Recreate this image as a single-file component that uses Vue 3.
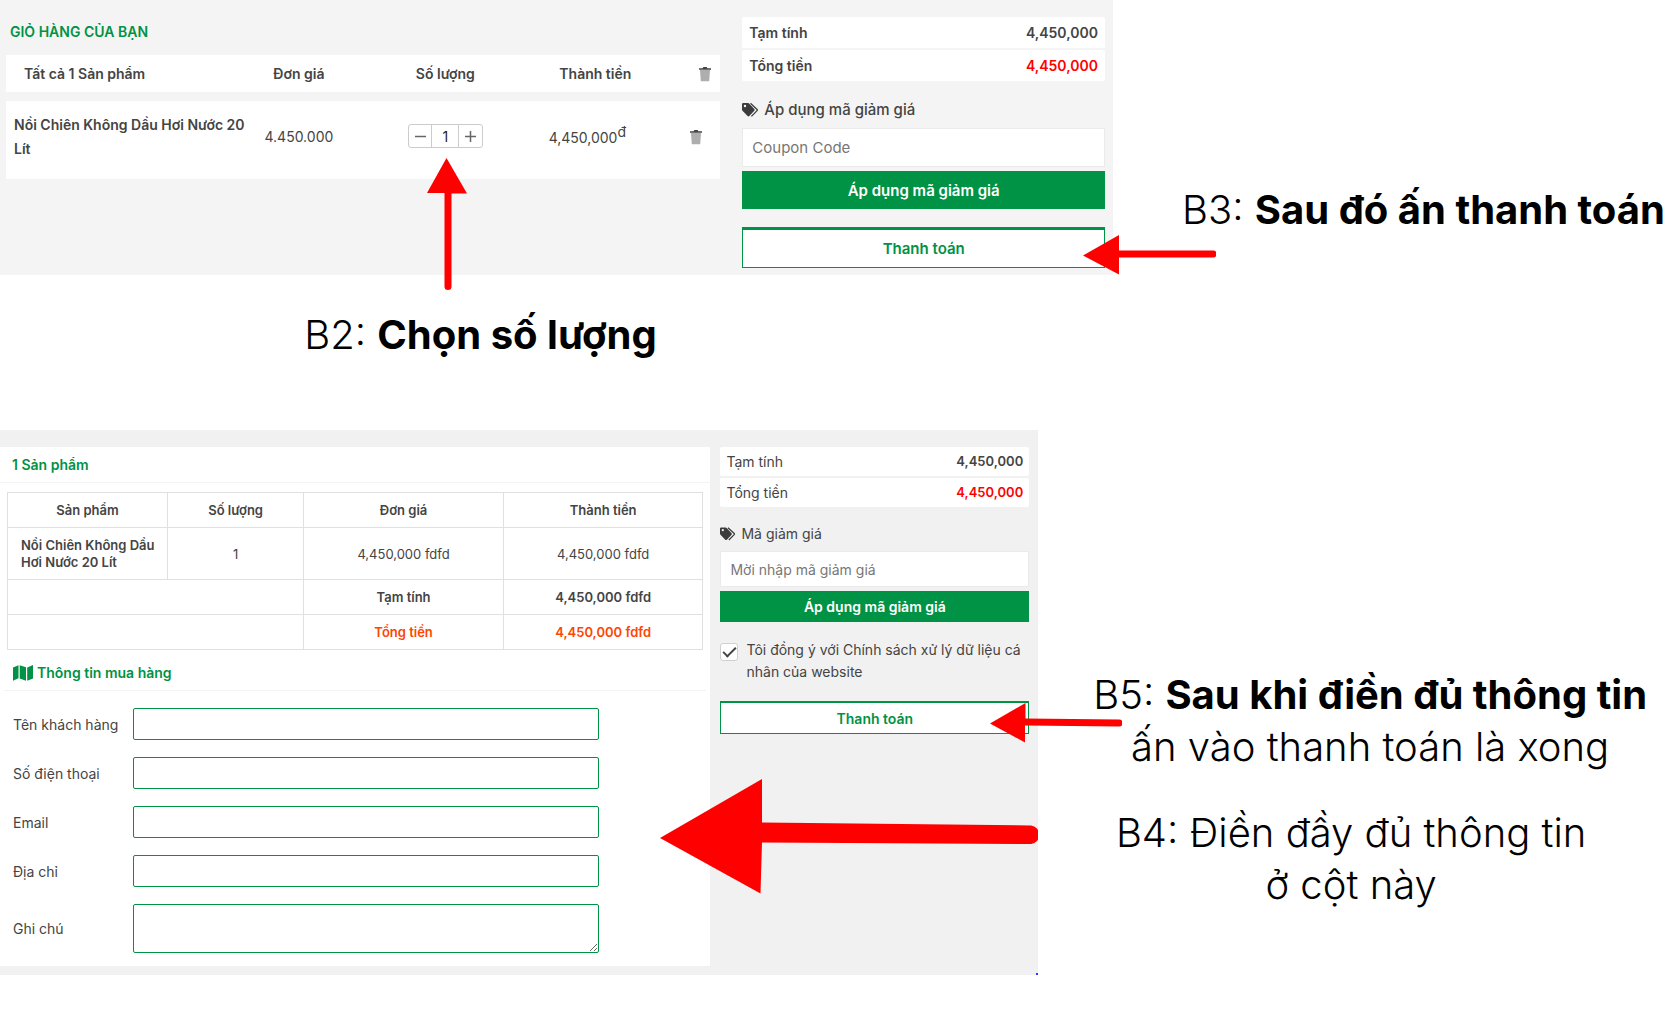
<template>
  <main class="guide">
    <div class="step">
      <section class="cart">
        <div class="cart-main">
          <h2 class="cart-title">GIỎ HÀNG CỦA BẠN</h2>
          <table class="cart-table">
            <colgroup>
              <col class="col-name" />
              <col class="col-price" />
              <col class="col-qty" />
              <col class="col-total" />
              <col class="col-remove" />
            </colgroup>
            <thead>
              <tr>
                <th class="left">Tất cả {{ quantity }} Sản phẩm</th>
                <th>Đơn giá</th>
                <th>Số lượng</th>
                <th>Thành tiền</th>
                <th class="remove">
                  <button type="button" class="icon-btn" aria-label="Xóa tất cả">
                    <svg width="12" height="15" viewBox="0 0 12 15">
                      <path d="M1 3h10l-.8 11.2H1.8z" fill="#aeaeae" />
                      <path d="M0 1.2h3.6L4.4 0h3.2l.8 1.2H12v1.6H0z" fill="#444" />
                    </svg>
                  </button>
                </th>
              </tr>
            </thead>
            <tbody>
              <tr>
                <td class="name">{{ productName }}</td>
                <td>4.450.000</td>
                <td>
                  <div class="stepper">
                    <button type="button" aria-label="Giảm" @click="decrease">
                      <svg width="11" height="11" viewBox="0 0 11 11">
                        <path d="M0 5.5h11" stroke="#666" stroke-width="1.5" />
                      </svg>
                    </button>
                    <input v-model.number="quantity" type="text" aria-label="Số lượng" />
                    <button type="button" aria-label="Tăng" @click="quantity++">
                      <svg width="11" height="11" viewBox="0 0 11 11">
                        <path d="M0 5.5h11M5.5 0v11" stroke="#666" stroke-width="1.5" />
                      </svg>
                    </button>
                    <svg class="arrow arrow-qty" width="40" height="132" viewBox="0 0 40 132">
                      <path d="M19.500 0L40 35.500H24.500V128.500a3.500 3.500 0 0 1-7 0V35H0z" fill="red" />
                    </svg>
                  </div>
                </td>
                <td class="total">4,450,000<sup>đ</sup></td>
                <td class="remove">
                  <button type="button" class="icon-btn" aria-label="Xóa sản phẩm">
                    <svg width="12" height="15" viewBox="0 0 12 15">
                      <path d="M1 3h10l-.8 11.2H1.8z" fill="#aeaeae" />
                      <path d="M0 1.2h3.6L4.4 0h3.2l.8 1.2H12v1.6H0z" fill="#444" />
                    </svg>
                  </button>
                </td>
              </tr>
            </tbody>
          </table>
        </div>

        <div class="cart-side">
          <dl class="summary">
            <div>
              <dt>Tạm tính</dt>
              <dd>4,450,000</dd>
            </div>
            <div>
              <dt>Tổng tiền</dt>
              <dd class="red">4,450,000</dd>
            </div>
          </dl>
          <label class="coupon-label" for="coupon">
            <svg width="17" height="14" viewBox="0 0 17 14">
              <path d="M0 1.200Q0 0 1.200 0H6q.6 0 1.100.5l5.200 5.600q.8.9 0 1.700l-5 5.300q-.9.8-1.700 0L.5 7.700Q0 7.200 0 6.500z" fill="#3c3c3c" />
              <circle cx="3" cy="3" r="1.200" fill="#f4f4f4" />
              <path d="M8.500.3l6.600 6.100q.6.6 0 1.200l-5.700 5.800" fill="none" stroke="#3c3c3c" stroke-width="1.300" />
            </svg>
            Áp dụng mã giảm giá
          </label>
          <input id="coupon" class="coupon-input" type="text" placeholder="Coupon Code" />
          <button type="button" class="apply">Áp dụng mã giảm giá</button>
          <div class="pay-wrap">
            <button type="button" class="pay">Thanh toán</button>
            <svg class="arrow arrow-pay" width="133" height="40" viewBox="0 0 133 40">
              <path d="M0 20.500L36 0V15.500H130a3.500 3.500 0 0 1 0 7H36V39.500z" fill="red" />
            </svg>
          </div>
        </div>
      </section>
      <aside class="notes notes-cart">
        <p>B3: <strong>Sau đó ấn thanh toán</strong></p>
      </aside>
    </div>

    <p class="note-qty">B2: <strong>Chọn số lượng</strong></p>

    <div class="step">
      <section class="checkout">
        <div class="order">
          <h2 class="order-title">{{ quantity }} Sản phẩm</h2>
          <table class="order-table">
            <thead>
              <tr>
                <th class="w-name">Sản phẩm</th>
                <th class="w-qty">Số lượng</th>
                <th>Đơn giá</th>
                <th>Thành tiền</th>
              </tr>
            </thead>
            <tbody>
              <tr class="product">
                <td class="name">{{ productName }}</td>
                <td>{{ quantity }}</td>
                <td>4,450,000 fdfd</td>
                <td>4,450,000 fdfd</td>
              </tr>
              <tr class="sum">
                <td colspan="2"></td>
                <td>Tạm tính</td>
                <td>4,450,000 fdfd</td>
              </tr>
              <tr class="sum grand">
                <td colspan="2"></td>
                <td>Tổng tiền</td>
                <td>4,450,000 fdfd</td>
              </tr>
            </tbody>
          </table>
          <h2 class="info-title">
            <svg width="20" height="16" viewBox="0 0 20 16">
              <path d="M0 2.400L5.500.3v13L0 15.700zM6.700.3l6.300 2v13.400l-6.300-2.200zM14.200 2.400L20 0v13.400l-5.800 2.400z" fill="#009245" />
            </svg>
            Thông tin mua hàng
          </h2>
          <form class="info" @submit.prevent>
            <div v-for="field in fields" :key="field.id" class="field">
              <label :for="field.id">{{ field.label }}</label>
              <textarea v-if="field.multiline" :id="field.id" v-model="field.value"></textarea>
              <input v-else :id="field.id" v-model="field.value" type="text" />
            </div>
          </form>
        </div>

        <div class="order-side">
          <dl class="summary small">
            <div>
              <dt>Tạm tính</dt>
              <dd>4,450,000</dd>
            </div>
            <div>
              <dt>Tổng tiền</dt>
              <dd class="red">4,450,000</dd>
            </div>
          </dl>
          <label class="coupon-label small" for="discount">
            <svg width="16" height="14" viewBox="0 0 17 14">
              <path d="M0 1.200Q0 0 1.200 0H6q.6 0 1.100.5l5.200 5.600q.8.9 0 1.700l-5 5.300q-.9.8-1.700 0L.5 7.700Q0 7.200 0 6.500z" fill="#3c3c3c" />
              <circle cx="3" cy="3" r="1.200" fill="#f1f1f1" />
              <path d="M8.500.3l6.600 6.100q.6.6 0 1.200l-5.700 5.800" fill="none" stroke="#3c3c3c" stroke-width="1.300" />
            </svg>
            Mã giảm giá
          </label>
          <input id="discount" class="coupon-input small" type="text" placeholder="Mời nhập mã giảm giá" />
          <button type="button" class="apply small">Áp dụng mã giảm giá</button>
          <label class="agree">
            <input v-model="agreed" type="checkbox" />
            <span>Tôi đồng ý với Chính sách xử lý dữ liệu cá nhân của website</span>
          </label>
          <div class="pay-wrap">
            <button type="button" class="pay small">Thanh toán</button>
            <svg class="arrow arrow-done" width="132" height="40" viewBox="0 0 132 40">
              <path d="M0 20.500L35.500 0V15.500L129 16.500a3.200 3.200 0 0 1 0 7L35 22.500V39.500z" fill="red" />
            </svg>
          </div>
        </div>

        <svg class="arrow arrow-form" width="378" height="115" viewBox="0 0 378 115">
          <path d="M0 59L102 0V43.500L371 46.500a9.300 9.300 0 0 1 0 18.500L102 63.500L100.500 114.500z" fill="red" />
        </svg>
        <i class="dot"></i>
      </section>
      <aside class="notes notes-checkout">
        <p>
          B5: <strong>Sau khi điền đủ thông tin</strong><br />
          ấn vào thanh toán là xong
        </p>
        <p class="note-form">
          B4: Điền đầy đủ thông tin<br />
          ở cột này
        </p>
      </aside>
    </div>
  </main>
</template>

<script setup>
import { ref, reactive } from 'vue'

const productName = 'Nồi Chiên Không Dầu Hơi Nước 20 Lít'
const quantity = ref(1)
const agreed = ref(true)

const fields = reactive([
  { id: 'customer', label: 'Tên khách hàng', value: '' },
  { id: 'phone', label: 'Số điện thoại', value: '' },
  { id: 'email', label: 'Email', value: '' },
  { id: 'address', label: 'Địa chỉ', value: '' },
  { id: 'note', label: 'Ghi chú', value: '', multiline: true },
])

function decrease() {
  if (quantity.value > 1) quantity.value--
}
</script>

<style>
body {
  background: #fff;
}
</style>

<style scoped>
.guide {
  font-family: Inter, 'Open Sans', sans-serif;
  font-size: 14px;
  color: #444;
  overflow-x: hidden;
}

.guide * {
  box-sizing: border-box;
}

h2,
p,
dl,
dd {
  margin: 0;
}

button,
input,
textarea {
  font: inherit;
  color: inherit;
}

button {
  cursor: pointer;
}

.step {
  display: flex;
}

.arrow {
  position: absolute;
  z-index: 2;
  pointer-events: none;
}

/* Cart */
.cart {
  flex: 0 0 66.25%;
  display: flex;
  gap: 22px;
  padding: 17px 8px 7px 6px;
  background: #f4f4f4;
}

.cart-main {
  flex: 1;
}

.cart-title {
  padding-left: 4px;
  font-size: 14px;
  font-weight: 600;
  line-height: 29px;
  color: #009245;
}

.cart-table {
  width: 100%;
  table-layout: fixed;
  border-collapse: separate;
  border-spacing: 0 9px;
  text-align: center;
}

.col-name {
  width: 34%;
}

.col-price {
  width: 14%;
}

.col-qty {
  width: 27%;
}

.col-total {
  width: 15%;
}

.col-remove {
  width: 10%;
}

.cart-table th {
  height: 37px;
  padding: 0;
  background: #fff;
  font-weight: 600;
}

.cart-table th.left {
  padding-left: 18px;
  text-align: left;
}

.cart-table td {
  height: 78px;
  padding: 0 0 8px;
  background: #fff;
}

.cart-table .name {
  padding: 0 0 6px 8px;
  text-align: left;
  font-weight: 600;
  line-height: 24px;
}

.cart-table .total {
  padding: 0 16px 6px 0;
}

.cart-table sup {
  font-size: 14px;
  line-height: 0;
}

.cart-table th.remove {
  padding-right: 9px;
  text-align: right;
}

.cart-table td.remove {
  padding-right: 18px;
  text-align: right;
}

.icon-btn {
  display: inline-flex;
  padding: 0;
  border: 0;
  background: none;
  vertical-align: middle;
}

.stepper {
  position: relative;
  display: inline-flex;
  width: 75px;
  height: 24px;
  border: 1px solid #ccc;
  border-radius: 3px;
  vertical-align: middle;
}

.stepper button {
  flex: 1;
  display: flex;
  align-items: center;
  justify-content: center;
  padding: 0;
  border: 0;
  background: none;
}

.stepper input {
  width: 28px;
  padding: 0;
  border: solid #ccc;
  border-width: 0 1px;
  background: none;
  text-align: center;
  color: #222;
}

.arrow-qty {
  top: 33px;
  left: 18px;
}

/* Right-hand columns of both screens */
.cart-side {
  flex: 0 0 33%;
}

.summary {
  display: grid;
  gap: 2px;
  font-weight: 600;
}

.summary div {
  display: flex;
  justify-content: space-between;
  padding: 0 7px;
  line-height: 31px;
  background: #fff;
  border-radius: 2px;
}

.summary.small {
  font-weight: 400;
}

.summary.small div {
  padding: 0 6px;
  line-height: 29px;
}

.summary.small dd {
  font-size: 13px;
  font-weight: 600;
}

.summary .red {
  color: red;
}

.coupon-label {
  display: flex;
  align-items: center;
  gap: 5px;
  margin-top: 18px;
  padding-bottom: 7px;
  font-size: 15px;
  font-weight: 500;
  line-height: 22px;
}

.coupon-label.small {
  margin-top: 16px;
  padding-bottom: 6px;
  font-size: 14px;
  font-weight: 400;
}

.coupon-input {
  display: block;
  width: 100%;
  height: 39px;
  padding: 0 9px;
  border: 1px solid #eaeaea;
  background: #fff;
  font-size: 15px;
}

.coupon-input::placeholder {
  color: #777;
}

.coupon-input.small {
  height: 36px;
  font-size: 14px;
}

.apply {
  display: block;
  width: 100%;
  height: 38px;
  margin-top: 4px;
  padding: 0;
  border: 0;
  background: #009245;
  color: #fff;
  font-size: 15px;
  font-weight: 600;
}

.apply.small {
  height: 31px;
  font-size: 14px;
}

.pay-wrap {
  position: relative;
  margin-top: 18px;
}

.pay {
  display: block;
  width: 100%;
  height: 41px;
  padding: 0;
  border: 1px solid #009245;
  border-top-width: 3px;
  background: #fff;
  color: #009245;
  font-size: 15px;
  font-weight: 600;
}

.pay.small {
  height: 33px;
  border-top-width: 2px;
  font-size: 14px;
}

.arrow-pay {
  top: 8px;
  left: calc(100% - 22px);
}

.arrow-done {
  top: 2px;
  left: calc(100% - 39px);
}

/* Checkout */
.checkout {
  position: relative;
  flex: 0 0 61.8%;
  display: flex;
  gap: 10px;
  padding: 17px 9px 9px 0;
  background: #f1f1f1;
}

.order {
  flex: 1;
  background: #fff;
}

.order-title {
  padding-left: 12px;
  font-size: 14px;
  font-weight: 600;
  line-height: 35px;
  color: #009245;
  border-bottom: 1px solid #f3f3f3;
}

.order-table {
  width: calc(100% - 14px);
  margin: 9px 7px 0;
  table-layout: fixed;
  border-collapse: collapse;
  text-align: center;
  font-size: 13px;
}

.order-table th,
.order-table td {
  height: 35px;
  padding: 0;
  border: 1px solid #e0e0e0;
}

.order-table th {
  font-weight: 600;
}

.w-name {
  width: 23%;
}

.w-qty {
  width: 19.6%;
}

.order-table .product td {
  height: 52px;
}

.order-table .name {
  padding: 0 4px 0 13px;
  text-align: left;
  font-weight: 600;
  line-height: 17px;
}

.sum {
  font-weight: 600;
}

.grand {
  color: #ff4500;
}

.info-title {
  display: flex;
  align-items: center;
  gap: 4px;
  margin: 5px 4px 0;
  padding-left: 9px;
  font-size: 14px;
  font-weight: 600;
  line-height: 35px;
  color: #009245;
  border-bottom: 1px solid #f3f3f3;
}

.info {
  display: grid;
  gap: 17px;
  padding: 17px 111px 13px 13px;
}

.field {
  display: flex;
  align-items: center;
}

.field label {
  width: 120px;
}

.field input,
.field textarea {
  flex: 1;
  height: 32px;
  padding: 4px 8px;
  border: 1px solid #009245;
  border-radius: 2px;
  background: #fff;
}

.field textarea {
  height: 49px;
}

.order-side {
  flex: 0 0 30%;
}

.agree {
  display: flex;
  gap: 8px;
  margin-top: 17px;
  line-height: 22px;
}

.agree input {
  appearance: none;
  flex: none;
  display: grid;
  place-items: center;
  width: 18px;
  height: 18px;
  margin: 4px 0 0;
  border: 1px solid #d0d0d0;
  border-radius: 3px;
  background: #fff;
}

.agree input:checked::before {
  content: '';
  width: 11px;
  height: 5px;
  margin-bottom: 3px;
  border: solid #444;
  border-width: 0 0 2px 2px;
  transform: rotate(-45deg);
}

.arrow-form {
  top: 349px;
  right: 0;
}

.dot {
  position: absolute;
  right: 0;
  bottom: 0;
  width: 2px;
  height: 2px;
  background: #33f;
}

/* Captions */
.notes,
.note-qty {
  font-size: 40px;
  font-weight: 300;
  line-height: 52px;
  color: #000;
  text-align: center;
  white-space: nowrap;
}

.notes strong,
.note-qty strong {
  font-weight: 700;
}

.notes {
  flex: 1;
}

.notes-cart {
  padding: 184px 0 0 54px;
}

.note-qty {
  width: 57.2%;
  padding: 34px 0 69px;
}

.notes-checkout {
  padding-top: 239px;
}

.notes-checkout p:first-child {
  padding-left: 22px;
}

.note-form {
  margin-top: 34px;
  padding-right: 16px;
}
</style>
